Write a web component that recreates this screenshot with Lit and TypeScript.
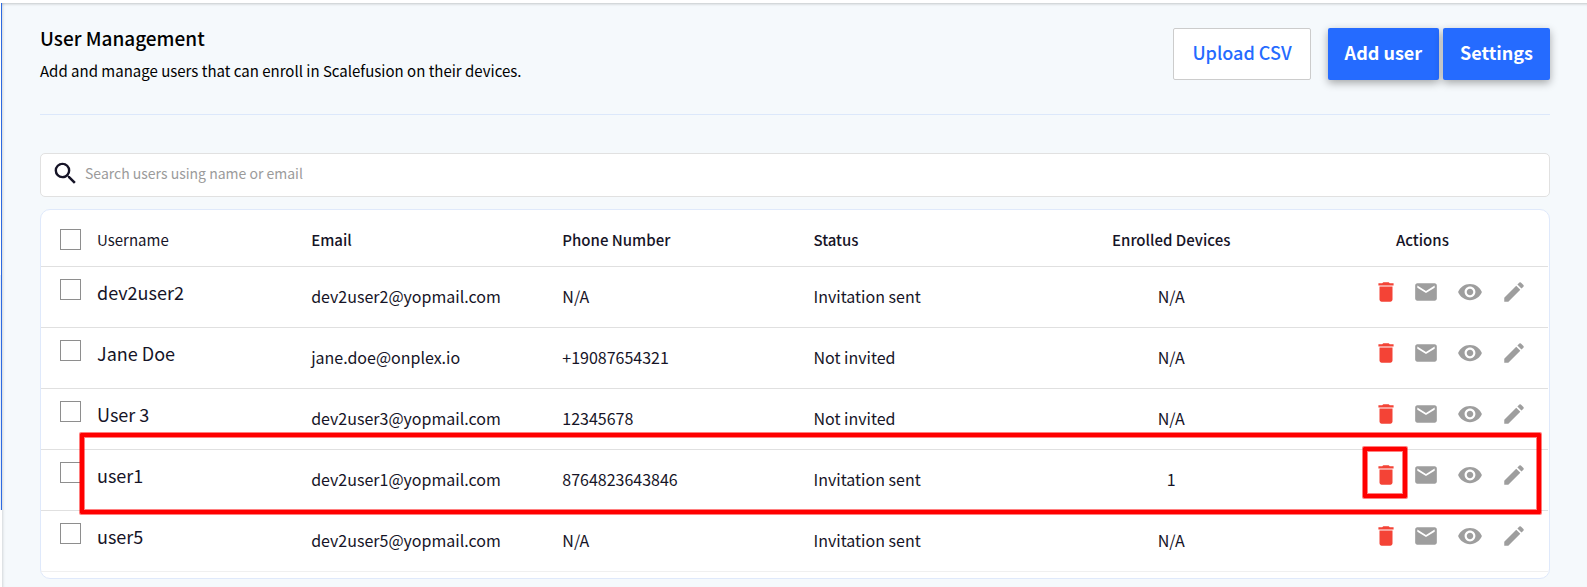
import { LitElement, html, css, svg, nothing } from "lit";
import { customElement, property } from "lit/decorators.js";

interface User {
  name: string;
  email: string;
  phone: string;
  status: string;
  devices: string;
  highlighted?: boolean;
}

const USERS: User[] = [
  { name: "dev2user2", email: "dev2user2@yopmail.com", phone: "N/A", status: "Invitation sent", devices: "N/A" },
  { name: "Jane Doe", email: "jane.doe@onplex.io", phone: "+19087654321", status: "Not invited", devices: "N/A" },
  { name: "User 3", email: "dev2user3@yopmail.com", phone: "12345678", status: "Not invited", devices: "N/A" },
  { name: "user1", email: "dev2user1@yopmail.com", phone: "8764823643846", status: "Invitation sent", devices: "1", highlighted: true },
  { name: "user5", email: "dev2user5@yopmail.com", phone: "N/A", status: "Invitation sent", devices: "N/A" },
];

const ICONS = {
  search: svg`<path d="M15.5 14h-.79l-.28-.27A6.47 6.47 0 0 0 16 9.5 6.5 6.5 0 1 0 9.5 16c1.61 0 3.09-.59 4.23-1.57l.27.28v.79l5 4.99L20.49 19l-4.99-5zm-6 0C7.01 14 5 11.99 5 9.5S7.01 5 9.5 5 14 7.01 14 9.5 11.99 14 9.5 14z"/>`,
  trash: svg`<path d="M6 19c0 1.1.9 2 2 2h8c1.1 0 2-.9 2-2V7H6v12zM19 4h-3.5l-1-1h-5l-1 1H5v2h14V4z"/>`,
  mail: svg`<path d="M20 4H4c-1.1 0-1.99.9-1.99 2L2 18c0 1.1.9 2 2 2h16c1.1 0 2-.9 2-2V6c0-1.1-.9-2-2-2zm0 4l-8 5-8-5V6l8 5 8-5v2z"/>`,
  eye: svg`<path d="M12 4.5C7 4.5 2.73 7.61 1 12c1.73 4.39 6 7.5 11 7.5s9.27-3.11 11-7.5c-1.73-4.39-6-7.5-11-7.5zM12 17c-2.76 0-5-2.24-5-5s2.24-5 5-5 5 2.24 5 5-2.24 5-5 5zm0-8c-1.66 0-3 1.34-3 3s1.34 3 3 3 3-1.34 3-3-1.34-3-3-3z"/>`,
  pencil: svg`<path d="M3 17.25V21h3.75L17.81 9.94l-3.75-3.75L3 17.25zM20.71 7.04a1 1 0 0 0 0-1.41l-2.34-2.34a1 1 0 0 0-1.41 0l-1.83 1.83 3.75 3.75 1.83-1.83z"/>`,
};

@customElement("ui-icon")
export class UiIcon extends LitElement {
  @property() name: keyof typeof ICONS = "search";

  static styles = css`
    :host { display: block; width: 26px; height: 26px; }
    svg { display: block; width: 100%; height: 100%; fill: currentColor; }
  `;

  render() {
    return html`<svg viewBox="0 0 24 24" aria-hidden="true">${ICONS[this.name]}</svg>`;
  }
}

@customElement("app-root")
export class AppRoot extends LitElement {
  static styles = css`
    :host {
      display: block;
      min-height: 100vh;
      box-sizing: border-box;
      padding-top: 3px;
      background: #fff;
      color: #161427;
      font-family: "Noto Sans CJK SC", "Noto Sans", sans-serif;
      font-size: 15px;
      line-height: 20px;
    }
    *, *::before, *::after { box-sizing: border-box; }
    button, input { font: inherit; color: inherit; }

    .shell { display: flex; min-height: calc(100vh - 3px); }
    .rail { flex: none; width: 2px; }
    .rail-menu { height: 507px; padding-top: 272px; border-right: 1px solid #2d6ae0; }
    .rail-current { height: 100%; background: #e4edfd; }
    .page {
      flex: 1;
      min-width: 0;
      padding: 25px 37px 6px 38px;
      background: #f5f9fc;
      box-shadow: inset 0 3px 3px -2px #0003, inset 3px 0 3px -2px #0002;
    }

    .head {
      display: flex;
      justify-content: space-between;
      align-items: flex-start;
      height: 87px;
      border-bottom: 1px solid #dce8fb;
      color: #000;
    }
    .title { margin: 0; font-size: 19px; line-height: 20px; font-weight: 500; }
    .lead { margin: 13px 0 0; }
    .buttons { display: flex; gap: 4px; }
    .button {
      height: 52px;
      padding: 0 17px 4px;
      border: 0;
      border-radius: 2px;
      background: #256bff;
      color: #fff;
      font-size: 18px;
      font-weight: 700;
      box-shadow: 0 3px 8px #0005;
    }
    .button.plain {
      margin-right: 13px;
      padding: 0 18px 4px;
      border: 1px solid #ccc;
      background: #fff;
      color: #256bff;
      font-weight: 500;
      box-shadow: none;
    }

    .search {
      display: flex;
      align-items: center;
      gap: 5px;
      height: 44px;
      margin: 38px 0 12px;
      padding: 0 10px 4px;
      border: 1px solid #e1e1e1;
      border-radius: 5px;
      background: #fff;
    }
    .search ui-icon { width: 29px; height: 29px; }
    .search-box { flex: 1; min-width: 0; padding: 0; border: 0; outline: 0; background: none; font-size: 14px; }
    .search-box::placeholder { color: #9b9b9b; opacity: 1; }

    .card {
      padding: 0 1px 6px 0;
      border: 1px solid #dfe9fb;
      border-radius: 10px;
      background: #fff;
    }
    .users { width: 100%; table-layout: fixed; border-collapse: separate; border-spacing: 0; }
    .users th, .users td { padding: 0 19px; border-bottom: 1px solid #e0e0e0; text-align: left; vertical-align: top; }
    .users th { height: 57px; padding-top: 19px; line-height: 22px; font-weight: 500; }
    .users td { height: 61px; padding-top: 19px; font-size: 16px; font-weight: 400; }
    .users tr { position: relative; }
    .users tbody tr:last-child td { border-bottom-color: #f0f0f0; }
    .users .center { text-align: center; }
    .users .first { font-weight: 400; }
    .users tbody .first { padding-top: 12px; font-size: 18px; line-height: 26px; }
    .pick { display: flex; align-items: flex-start; gap: 16px; }
    .check {
      appearance: none;
      flex: none;
      width: 21px;
      height: 21px;
      margin: 0;
      border: 1px solid #8e8e8e;
      background: #fff;
    }
    .check:checked { background: #256bff; }
    .users tbody .actions-cell { padding: 12px 21px 0 0; }
    .actions { display: flex; justify-content: flex-end; gap: 18px; }
    .action { position: relative; padding: 0; border: 0; background: none; color: #9e9e9e; }
    .action.danger { margin-right: -4px; color: #f44336; }

    .frame {
      position: absolute;
      border: 4px solid #f00;
      border-radius: 1px;
      box-shadow: 0 0 0 1px #ff000080, inset 0 0 0 1px #ff000080;
      pointer-events: none;
    }
    .row-frame { inset: -17px 7px -3px 39px; }
    .icon-frame { inset: -15px -8px -10px -10px; }
  `;

  private renderRow(user: User, index: number) {
    const id = `user-${index}`;
    return html`
      <tr>
        <td class="first">
          <div class="pick">
            <input class="check" type="checkbox" id=${id} />
            <label for=${id}>${user.name}</label>
          </div>
          ${user.highlighted ? html`<span class="frame row-frame"></span>` : nothing}
        </td>
        <td>${user.email}</td>
        <td>${user.phone}</td>
        <td>${user.status}</td>
        <td class="center">${user.devices}</td>
        <td class="actions-cell">
          <div class="actions">
            <button class="action danger" aria-label="Delete">
              <ui-icon name="trash"></ui-icon>
              ${user.highlighted ? html`<span class="frame icon-frame"></span>` : nothing}
            </button>
            <button class="action" aria-label="Send invitation"><ui-icon name="mail"></ui-icon></button>
            <button class="action" aria-label="View"><ui-icon name="eye"></ui-icon></button>
            <button class="action" aria-label="Edit"><ui-icon name="pencil"></ui-icon></button>
          </div>
        </td>
      </tr>
    `;
  }

  render() {
    return html`
      <div class="shell">
        <div class="rail"><div class="rail-menu"><div class="rail-current"></div></div></div>
        <main class="page">
          <header class="head">
            <div>
              <h1 class="title">User Management</h1>
              <p class="lead">Add and manage users that can enroll in Scalefusion on their devices.</p>
            </div>
            <div class="buttons">
              <button class="button plain">Upload CSV</button>
              <button class="button">Add user</button>
              <button class="button">Settings</button>
            </div>
          </header>

          <label class="search">
            <ui-icon name="search"></ui-icon>
            <input class="search-box" type="text" placeholder="Search users using name or email" aria-label="Search users" />
          </label>

          <section class="card">
            <table class="users">
              <thead>
                <tr>
                  <th class="first">
                    <div class="pick">
                      <input class="check" type="checkbox" id="all" />
                      <label for="all">Username</label>
                    </div>
                  </th>
                  <th>Email</th>
                  <th>Phone Number</th>
                  <th>Status</th>
                  <th class="center">Enrolled Devices</th>
                  <th class="center">Actions</th>
                </tr>
              </thead>
              <tbody>
                ${USERS.map((user, index) => this.renderRow(user, index))}
              </tbody>
            </table>
          </section>
        </main>
      </div>
    `;
  }
}
